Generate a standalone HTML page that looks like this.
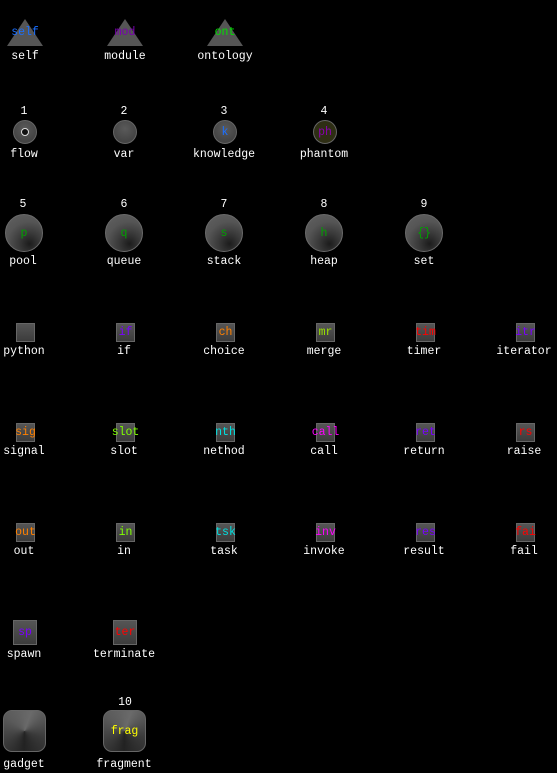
<!DOCTYPE html>
<html><head><meta charset="utf-8"><style>
body{margin:0;width:557px;height:773px;background:#000;overflow:hidden;position:relative;font-family:"Liberation Mono",monospace;font-size:11.5px;}
.l{position:absolute;width:100px;margin-left:-50px;text-align:center;color:#fff;line-height:12px;white-space:nowrap;margin-top:2px;}
.i{position:absolute;box-sizing:border-box;display:flex;justify-content:center;align-items:center;white-space:nowrap;}
.tri{position:absolute;width:0;height:0;border-left:18px solid transparent;border-right:18px solid transparent;border-bottom:27px solid #555;margin-left:-18px;}
.sc{width:24px;height:24px;margin-left:-12px;border-radius:50%;background:radial-gradient(circle at 50% 35%,#5a5a5a,#444 70%);border:1px solid #666;}
.bc{width:38px;height:38px;margin-left:-19px;border-radius:50%;background:radial-gradient(circle at 65% 80%,#1c1c1c 0,#3a3a3a 30%,#555 60%,#626262 100%);border:1px solid #6a6a6a;}
.sq{width:19px;height:19px;margin-left:-9px;background:linear-gradient(#555,#3c3c3c);border:1px solid #666;}
.sq2{width:24px;height:25px;margin-left:-12px;background:linear-gradient(#555,#3c3c3c);border:1px solid #666;}
.rs{width:43px;height:42px;margin-left:-22px;border-radius:9px;border:1px solid #666;background:conic-gradient(from 20deg at 50% 50%,#6a6a6a,#3a3a3a 25%,#222 45%,#3a3a3a 60%,#5a5a5a 80%,#6a6a6a);}
</style></head><body>
<div class="tri" style="left:25px;top:19px"></div>
<div class="tri" style="left:125px;top:19px"></div>
<div class="tri" style="left:225px;top:19px"></div>
<div class="l" style="left:25px;top:25px;color:#1a6fff">self</div>
<div class="l" style="left:125px;top:25px;color:#7a00b0">mod</div>
<div class="l" style="left:225px;top:25px;color:#00e000">ont</div>
<div class="l" style="left:25px;top:49px">self</div>
<div class="l" style="left:125px;top:49px">module</div>
<div class="l" style="left:225px;top:49px">ontology</div>

<div class="l" style="left:24px;top:104px">1</div>
<div class="l" style="left:124px;top:104px">2</div>
<div class="l" style="left:224px;top:104px">3</div>
<div class="l" style="left:324px;top:104px">4</div>
<div class="i sc" style="left:25px;top:120px"><div style="width:6px;height:6px;border:1.5px solid #ddd;border-radius:50%;background:#111"></div></div>
<div class="i sc" style="left:125px;top:120px"></div>
<div class="i sc" style="left:225px;top:120px;color:#1a6fff">k</div>
<div class="i sc" style="left:325px;top:120px;color:#8a00b0;background:#2e2e14">ph</div>
<div class="l" style="left:24px;top:147px">flow</div>
<div class="l" style="left:124px;top:147px">var</div>
<div class="l" style="left:224px;top:147px">knowledge</div>
<div class="l" style="left:324px;top:147px">phantom</div>

<div class="l" style="left:23px;top:197px">5</div>
<div class="l" style="left:124px;top:197px">6</div>
<div class="l" style="left:224px;top:197px">7</div>
<div class="l" style="left:324px;top:197px">8</div>
<div class="l" style="left:424px;top:197px">9</div>
<div class="i bc" style="left:24px;top:214px;color:#00a000">p</div>
<div class="i bc" style="left:124px;top:214px;color:#00a000">q</div>
<div class="i bc" style="left:224px;top:214px;color:#00a000">s</div>
<div class="i bc" style="left:324px;top:214px;color:#00a000">h</div>
<div class="i bc" style="left:424px;top:214px;color:#00a000">{}</div>
<div class="l" style="left:23px;top:254px">pool</div>
<div class="l" style="left:124px;top:254px">queue</div>
<div class="l" style="left:224px;top:254px">stack</div>
<div class="l" style="left:324px;top:254px">heap</div>
<div class="l" style="left:424px;top:254px">set</div>

<div class="i sq" style="left:25px;top:323px"></div>
<div class="i sq" style="left:125px;top:323px;color:#7a00ff">if</div>
<div class="i sq" style="left:225px;top:323px;color:#ff8000">ch</div>
<div class="i sq" style="left:325px;top:323px;color:#9ae000">mr</div>
<div class="i sq" style="left:425px;top:323px;color:#f00">tim</div>
<div class="i sq" style="left:525px;top:323px;color:#7a00ff">itr</div>
<div class="l" style="left:24px;top:344px">python</div>
<div class="l" style="left:124px;top:344px">if</div>
<div class="l" style="left:224px;top:344px">choice</div>
<div class="l" style="left:324px;top:344px">merge</div>
<div class="l" style="left:424px;top:344px">timer</div>
<div class="l" style="left:524px;top:344px">iterator</div>

<div class="i sq" style="left:25px;top:423px;color:#ff8000">sig</div>
<div class="i sq" style="left:125px;top:423px;color:#80ff00">slot</div>
<div class="i sq" style="left:225px;top:423px;color:#00e0e0">nth</div>
<div class="i sq" style="left:325px;top:423px;color:#ff00ff">call</div>
<div class="i sq" style="left:425px;top:423px;color:#7a00ff">ret</div>
<div class="i sq" style="left:525px;top:423px;color:#f00">rs</div>
<div class="l" style="left:24px;top:444px">signal</div>
<div class="l" style="left:124px;top:444px">slot</div>
<div class="l" style="left:224px;top:444px">nethod</div>
<div class="l" style="left:324px;top:444px">call</div>
<div class="l" style="left:424px;top:444px">return</div>
<div class="l" style="left:524px;top:444px">raise</div>

<div class="i sq" style="left:25px;top:523px;color:#ff8000">out</div>
<div class="i sq" style="left:125px;top:523px;color:#80ff00">in</div>
<div class="i sq" style="left:225px;top:523px;color:#00e0e0">tsk</div>
<div class="i sq" style="left:325px;top:523px;color:#ff00ff">inv</div>
<div class="i sq" style="left:425px;top:523px;color:#7a00ff">res</div>
<div class="i sq" style="left:525px;top:523px;color:#f00">fai</div>
<div class="l" style="left:24px;top:544px">out</div>
<div class="l" style="left:124px;top:544px">in</div>
<div class="l" style="left:224px;top:544px">task</div>
<div class="l" style="left:324px;top:544px">invoke</div>
<div class="l" style="left:424px;top:544px">result</div>
<div class="l" style="left:524px;top:544px">fail</div>

<div class="i sq2" style="left:25px;top:620px;color:#7a00ff">sp</div>
<div class="i sq2" style="left:125px;top:620px;color:#f00">ter</div>
<div class="l" style="left:24px;top:647px">spawn</div>
<div class="l" style="left:124px;top:647px">terminate</div>

<div class="l" style="left:125px;top:695px">10</div>
<div class="i rs" style="left:25px;top:710px"></div>
<div class="i rs" style="left:125px;top:710px;color:#ffff00">frag</div>
<div class="l" style="left:24px;top:757px">gadget</div>
<div class="l" style="left:124px;top:757px">fragment</div>
</body></html>
